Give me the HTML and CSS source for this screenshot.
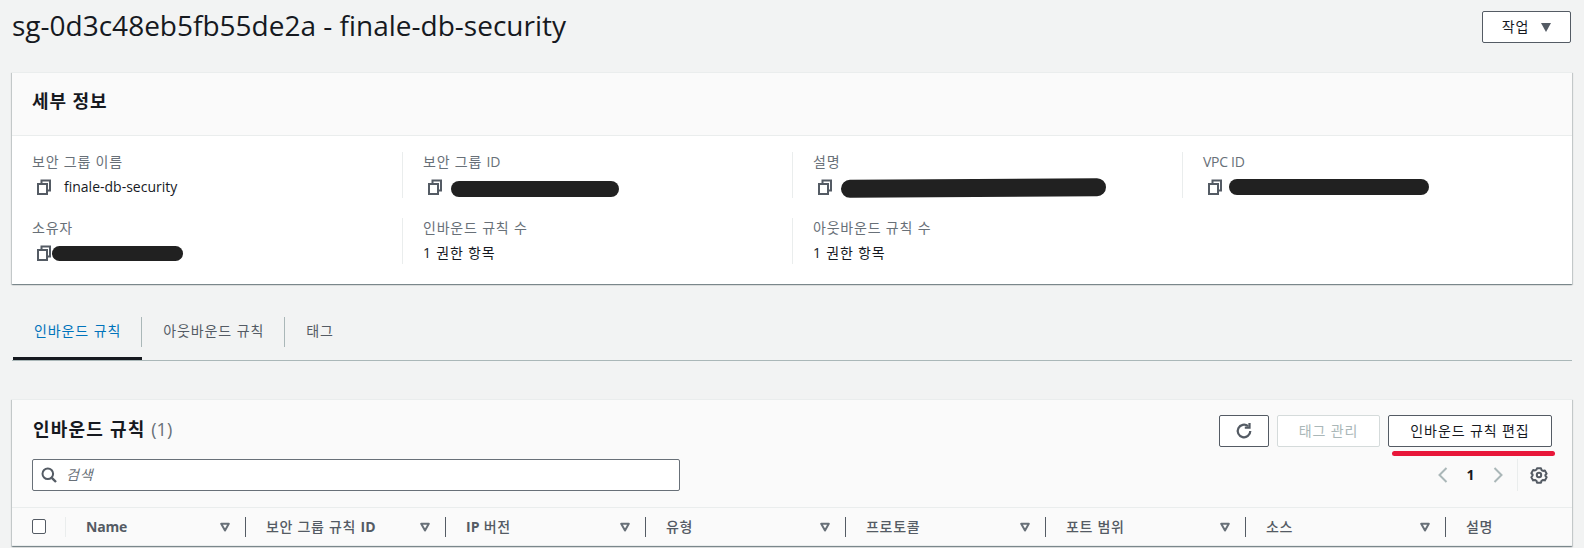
FILE: index.html
```html
<!DOCTYPE html>
<html lang="ko">
<head>
<meta charset="utf-8">
<title>finale-db-security</title>
<link rel="stylesheet" href="styles.css">
</head>
<body>
<svg class="defs" width="0" height="0" aria-hidden="true">
  <symbol id="copy" viewBox="0 0 16 16"><path d="M5.500 4.500V1.500h8.500v10h-3" fill="none" stroke="#545b64" stroke-width="2"/><rect x="2" y="5" width="9" height="10" fill="none" stroke="#545b64" stroke-width="2"/></symbol>
  <symbol id="sort" viewBox="0 0 10 10"><path d="M1.200 1.800h7.600L5 8.400z" fill="none" stroke="#687078" stroke-width="2" stroke-linejoin="round"/></symbol>
</svg>
<main class="page">
  <header class="title-row">
    <h1 class="title">sg-0d3c48eb5fb55de2a - finale-db-security</h1>
    <button class="btn btn-actions">작업<span class="caret"></span></button>
  </header>

  <section class="panel details">
    <div class="panel-head"><h2 class="h-details">세부 정보</h2></div>
    <div class="detail-grid">
      <div class="cell">
        <div class="label">보안 그룹 이름</div>
        <div class="value"><svg class="copy"><use href="#copy"/></svg><span class="val-text">finale-db-security</span></div>
      </div>
      <div class="cell">
        <div class="label">보안 그룹 <span class="lat">ID</span></div>
        <div class="value"><svg class="copy"><use href="#copy"/></svg><span class="mask mask-sg"></span></div>
      </div>
      <div class="cell">
        <div class="label">설명</div>
        <div class="value"><svg class="copy"><use href="#copy"/></svg><span class="mask mask-desc"></span></div>
      </div>
      <div class="cell">
        <div class="label"><span class="lat">VPC ID</span></div>
        <div class="value"><svg class="copy"><use href="#copy"/></svg><span class="mask mask-vpc"></span></div>
      </div>
      <div class="cell">
        <div class="label">소유자</div>
        <div class="value"><svg class="copy"><use href="#copy"/></svg><span class="mask mask-owner"></span></div>
      </div>
      <div class="cell">
        <div class="label">인바운드 규칙 수</div>
        <div class="value">1 권한 항목</div>
      </div>
      <div class="cell">
        <div class="label">아웃바운드 규칙 수</div>
        <div class="value">1 권한 항목</div>
      </div>
    </div>
  </section>

  <nav class="tabs">
    <a class="tab active">인바운드 규칙</a>
    <a class="tab">아웃바운드 규칙</a>
    <a class="tab">태그</a>
  </nav>

  <section class="panel rules">
    <div class="rules-head">
      <div class="rules-row">
        <h2 class="h-rules">인바운드 규칙 <span class="count">(1)</span></h2>
        <div class="actions">
          <button class="btn btn-icon" aria-label="새로 고침"><svg width="18" height="18" viewBox="0 0 16 16"><path d="M13.600 8A5.600 5.600 0 1 1 11.600 3.700" fill="none" stroke="#545b64" stroke-width="2"/><path d="M12.900 0.800v4.200H8.700" fill="none" stroke="#545b64" stroke-width="2"/></svg></button>
          <button class="btn btn-disabled">태그 관리</button>
          <div class="edit-wrap">
            <button class="btn btn-edit">인바운드 규칙 편집</button>
            <span class="redline"></span>
          </div>
        </div>
      </div>
      <div class="rules-row">
        <div class="search">
          <svg width="16" height="16" viewBox="0 0 16 16"><circle cx="6.800" cy="6.800" r="5.300" fill="none" stroke="#545b64" stroke-width="2"/><path d="M10.800 10.800L15 15" stroke="#545b64" stroke-width="2.400"/></svg>
          <span class="placeholder">검색</span>
        </div>
        <div class="pager">
          <svg class="chev" width="10" height="16" viewBox="0 0 10 16"><path d="M8.500 1L1.500 8l7 7" fill="none" stroke="#aab7b8" stroke-width="2"/></svg>
          <span class="page-no">1</span>
          <svg class="chev" width="10" height="16" viewBox="0 0 10 16"><path d="M1.500 1l7 7-7 7" fill="none" stroke="#aab7b8" stroke-width="2"/></svg>
          <span class="pager-sep"></span>
          <svg class="gear" width="18" height="18" viewBox="0 0 18 18"><path d="M6.800 1.500h4.400l.6 2 1.700 1 2-.5 2 3.500-1.400 1.500v1l1.400 1.500-2 3.500-2-.5-1.700 1-.6 2H6.800l-.6-2-1.700-1-2 .5-2-3.500L1.900 9.500v-1L.5 7l2-3.500 2 .5 1.700-1z" transform="translate(.9 .9) scale(.9)" fill="none" stroke="#545b64" stroke-width="2.200" stroke-linejoin="round"/><circle cx="9" cy="9" r="2.200" fill="none" stroke="#545b64" stroke-width="2"/></svg>
        </div>
      </div>
    </div>
    <div class="thead">
      <div class="th-check"><span class="checkbox"></span></div>
      <div class="th th-name">Name<svg class="sort"><use href="#sort"/></svg></div>
      <div class="th"><span>보안 그룹 규칙 <b class="lat-b">ID</b></span><svg class="sort"><use href="#sort"/></svg></div>
      <div class="th"><span><b class="lat-b">IP</b> 버전</span><svg class="sort"><use href="#sort"/></svg></div>
      <div class="th">유형<svg class="sort"><use href="#sort"/></svg></div>
      <div class="th">프로토콜<svg class="sort"><use href="#sort"/></svg></div>
      <div class="th">포트 범위<svg class="sort"><use href="#sort"/></svg></div>
      <div class="th">소스<svg class="sort"><use href="#sort"/></svg></div>
      <div class="th th-last">설명</div>
    </div>
  </section>
</main>
</body>
</html>
```

FILE: styles.css
```css
* { box-sizing: border-box; }
html, body { margin: 0; height: 548px; overflow: hidden; }
body {
  background: #f2f3f3;
  color: #16191f;
  font-family: "Open Sans", "Noto Sans CJK KR", sans-serif;
  font-size: 14px;
  line-height: 20px;
}
.defs { position: absolute; }
.page { padding: 0 12px; }

.title-row {
  display: flex;
  justify-content: space-between;
  align-items: center;
  height: 54px;
  margin-bottom: 18px;
}
.title { margin: 0 0 4px; font-size: 28px; line-height: 50px; font-weight: 400; }

.btn {
  height: 32px;
  background: #fff;
  border: 1px solid #545b64;
  border-radius: 2px;
  color: #545b64;
  font: inherit;
  letter-spacing: .9px;
  padding: 0;
}
.btn-actions { width: 89px; margin-right: 1px; color: #16191f; display: flex; align-items: center; justify-content: center; gap: 12px; }
.caret { width: 0; height: 0; border-left: 5px solid transparent; border-right: 5px solid transparent; border-top: 9px solid #545b64; }

.panel {
  background: #fff;
  border-top: 1px solid #eaeded;
  box-shadow: 0 1px 1px 0 rgba(0,28,36,.3), 1px 1px 1px 0 rgba(0,28,36,.15), -1px 1px 1px 0 rgba(0,28,36,.15);
}
.panel-head {
  height: 63px;
  background: #fafafa;
  border-bottom: 1px solid #eaeded;
  padding: 0 20px 7px;
  display: flex;
  align-items: center;
}
.h-details { margin: 0; font-size: 18px; font-weight: 700; letter-spacing: .9px; }

.detail-grid {
  display: grid;
  grid-template-columns: repeat(4, 390px);
  row-gap: 20px;
  padding: 16px 0 20px;
}
.cell { height: 46px; padding-left: 20px; border-left: 1px solid #eaeded; }
.cell:nth-child(4n+1) { border-left: 0; }
.label { color: #687078; height: 20px; letter-spacing: .8px; }
.lat { letter-spacing: -.3px; }
.value { display: flex; align-items: center; height: 24px; margin-top: 3px; letter-spacing: .8px; }
.copy { width: 16px; height: 16px; margin-left: 4px; flex: none; }
.val-text { margin-left: 12px; letter-spacing: 0; font-size: 14px; }

.mask { display: block; background: #212121; border-radius: 9px; }
.mask-sg { width: 168px; height: 16px; margin-left: 8px; margin-top: 4px; }
.mask-desc { width: 265px; height: 18px; margin-left: 8px; margin-top: 2px; transform: rotate(-.4deg); }
.mask-vpc { width: 200px; height: 16px; margin-left: 6px; }
.mask-owner { width: 131px; height: 15px; }

.tabs {
  display: flex;
  height: 43px;
  margin-top: 33px;
  border-bottom: 1px solid #aab7b8;
  box-sizing: content-box;
  padding-left: 1px;
}
.tab { position: relative; height: 43px; padding: 4px 21px 0 21px; line-height: 20px; display: block; color: #545b64; letter-spacing: .9px; }
.tab:not(:last-child)::after {
  content: "";
  position: absolute;
  right: 0;
  top: 0;
  height: 30px;
  border-right: 1px solid #aab7b8;
}
.tab.active { color: #0073bb; border-bottom: 3px solid #16191f; }

.rules { margin-top: 38px; background: #fafafa; }
.rules-head { padding: 15px 20px 16px 21px; }
.rules-row { display: flex; justify-content: space-between; height: 32px; }
.rules-row + .rules-row { margin-top: 12px; margin-left: -1px; }
.h-rules { margin: 0; font-size: 18px; font-weight: 700; line-height: 28px; letter-spacing: 1.2px; }
.count { font-weight: 400; color: #687078; letter-spacing: 0; }
.actions { display: flex; gap: 8px; }
.btn-icon { width: 50px; display: flex; align-items: center; justify-content: center; }
.btn-disabled { width: 103px; border-color: #d5dbdb; color: #aab7b8; }
.edit-wrap { position: relative; }
.btn-edit { display: block; width: 164px; color: #16191f; }
.redline {
  position: absolute;
  left: 4px;
  top: 36px;
  width: 163px;
  height: 5px;
  border-radius: 3px;
  background: #e8173a;
}

.search {
  width: 648px;
  height: 32px;
  background: #fff;
  border: 1px solid #687078;
  border-radius: 2px;
  display: flex;
  align-items: center;
  padding-left: 8px;
  gap: 9px;
}
.placeholder { color: #687078; font-style: italic; letter-spacing: .9px; }
.pager { display: flex; align-items: center; }
.chev { flex: none; }
.page-no { width: 45px; text-align: center; font-weight: 700; }
.pager-sep { width: 1px; height: 32px; background: #eaeded; margin-left: 14px; margin-right: 12px; }
.gear { margin-right: 4px; }

.thead {
  display: grid;
  grid-template-columns: 53px 180px repeat(6, 200px) 1fr;
  height: 39px;
  border-top: 1px solid #eaeded;
  border-bottom: 1px solid #eaeded;
  align-items: center;
}
.th-check { padding-left: 20px; }
.checkbox { display: block; width: 14px; height: 15px; border: 1px solid #545b64; border-radius: 2px; background: #fff; }
.th {
  position: relative;
  height: 20px;
  padding-left: 21px;
  padding-right: 15px;
  font-weight: 500;
  color: #545b64;
  display: flex;
  justify-content: space-between;
  align-items: center;
  letter-spacing: .7px;
}
.th::before { content: ""; position: absolute; left: 0; top: 0; height: 20px; border-left: 1px solid #545b64; }
.lat-b { font-weight: 700; letter-spacing: 0; }
.th-name { font-weight: 700; letter-spacing: -.2px; }
.th-name::before { border-left-color: #eaeded; }
.sort { width: 10px; height: 10px; flex: none; }
.th-last { padding-right: 0; justify-content: flex-start; }
```
